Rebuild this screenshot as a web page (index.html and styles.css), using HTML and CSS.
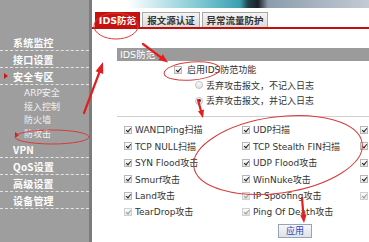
FILE: index.html
```html
<!DOCTYPE html>
<html lang="zh-CN">
<head>
<meta charset="utf-8">
<title>IDS防范</title>
<link rel="stylesheet" href="styles.css">
</head>
<body>
<div class="page">
  <aside class="sidebar">
    <div class="nav-item">系统监控</div>
    <div class="nav-item">接口设置</div>
    <div class="nav-item current">安全专区</div>
    <ul class="sub-list">
      <li class="sub-item">ARP安全</li>
      <li class="sub-item">接入控制</li>
      <li class="sub-item">防火墙</li>
      <li class="sub-item current">防攻击</li>
    </ul>
    <div class="nav-item latin">VPN</div>
    <div class="nav-item">QoS设置</div>
    <div class="nav-item">高级设置</div>
    <div class="nav-item">设备管理</div>
  </aside>
  <main class="main">
    <div class="banner"></div>
    <nav class="tabs">
      <span class="tab active">IDS防范</span>
      <span class="tab">报文源认证</span>
      <span class="tab">异常流量防护</span>
    </nav>
    <section class="content">
      <div class="section-bar">IDS防范</div>
      <div class="options">
        <label class="opt opt-enable"><input type="checkbox" class="cb" checked> 启用IDS防范功能</label>
        <label class="opt opt-radio"><input type="radio" name="mode" class="rd"> 丢弃攻击报文，不记入日志</label>
        <label class="opt opt-radio"><input type="radio" name="mode" class="rd" checked> 丢弃攻击报文，并记入日志</label>
      </div>
      <div class="grid">
        <label class="cell"><input type="checkbox" class="cb" checked>WAN口Ping扫描</label>
        <label class="cell"><input type="checkbox" class="cb" checked>UDP扫描</label>
        <label class="cell"><input type="checkbox" class="cb" checked></label>
        <label class="cell"><input type="checkbox" class="cb" checked>TCP NULL扫描</label>
        <label class="cell"><input type="checkbox" class="cb" checked>TCP Stealth FIN扫描</label>
        <label class="cell"><input type="checkbox" class="cb" checked></label>
        <label class="cell"><input type="checkbox" class="cb" checked>SYN Flood攻击</label>
        <label class="cell"><input type="checkbox" class="cb" checked>UDP Flood攻击</label>
        <label class="cell"><input type="checkbox" class="cb" checked></label>
        <label class="cell"><input type="checkbox" class="cb" checked>Smurf攻击</label>
        <label class="cell"><input type="checkbox" class="cb" checked>WinNuke攻击</label>
        <label class="cell"><input type="checkbox" class="cb" checked></label>
        <label class="cell"><input type="checkbox" class="cb" checked>Land攻击</label>
        <label class="cell"><input type="checkbox" class="cb faint" checked>IP Spoofing攻击</label>
        <label class="cell"><input type="checkbox" class="cb faint" checked></label>
        <label class="cell"><input type="checkbox" class="cb faint" checked>TearDrop攻击</label>
        <label class="cell"><input type="checkbox" class="cb faint" checked>Ping Of Death攻击</label>
        <label class="cell"></label>
      </div>
      <div class="actions"><button class="btn">应用</button></div>
    </section>
  </main>
  <svg class="marks" width="369" height="242" viewBox="0 0 369 242">
    <g fill="none" stroke="#d83a3a" stroke-width="1">
      <ellipse cx="116" cy="26" rx="22" ry="13"/>
      <ellipse cx="192" cy="71" rx="28" ry="9" transform="rotate(-5 192 71)"/>
      <ellipse cx="278" cy="155" rx="85" ry="38" transform="rotate(-8 278 155)"/>
      <ellipse cx="52" cy="137" rx="37" ry="7"/>
    </g>
    <g stroke="#e41e1e" stroke-width="2.2" stroke-linecap="round" fill="#e41e1e">
      <line x1="84" y1="113" x2="99.5" y2="72"/>
      <polygon points="103,62 103.2,74 95.6,71.2" stroke="none"/>
      <line x1="143" y1="44" x2="161" y2="57.5"/>
      <polygon points="168,62.5 158.4,60 162.8,54.2" stroke="none"/>
      <line x1="198" y1="100" x2="201" y2="111"/>
      <polygon points="203,118 204,109.4 198,111.2" stroke="none"/>
      <line x1="302" y1="198" x2="303.4" y2="215"/>
      <polygon points="304,223 306.6,214.6 300.2,215.2" stroke="none"/>
    </g>
  </svg>
</div>
</body>
</html>
```
FILE: styles.css
```css
* { box-sizing: border-box; }
html, body { margin: 0; padding: 0; }
body {
  width: 369px;
  height: 242px;
  overflow: hidden;
  background: #fff;
  font-family: "DejaVu Sans", "Noto Sans CJK SC", sans-serif;
  font-size: 9px;
  color: #333;
}
.page {
  position: relative;
  display: flex;
  width: 369px;
  height: 242px;
  overflow: hidden;
}

/* sidebar */
.sidebar {
  width: 92px;
  flex: none;
  background: #9e9e9e;
  border-right: 3px solid #7c7c7c;
  padding-top: 34px;
  color: #fff;
}
.nav-item {
  position: relative;
  height: 17px;
  line-height: 18px;
  padding-left: 13px;
  border-bottom: 1px dashed #e4e4e4;
  font-family: "Noto Sans CJK SC", sans-serif;
  font-weight: 700;
  font-size: 10px;
  letter-spacing: 0.2px;
}
.nav-item.current::before {
  content: "";
  position: absolute;
  left: 4px;
  top: 5px;
  border-left: 4px solid #d01818;
  border-top: 3px solid transparent;
  border-bottom: 3px solid transparent;
}
.sub-list {
  list-style: none;
  margin: 0;
  padding: 2px 0 0 0;
  height: 56px;
}
.sub-item {
  position: relative;
  height: 13.5px;
  line-height: 13.5px;
  padding-left: 24px;
  color: #f2f2f2;
  font-size: 9px;
}
.sub-item.current::before {
  content: "";
  position: absolute;
  left: 15px;
  top: 4px;
  border-left: 4px solid #d01818;
  border-top: 3px solid transparent;
  border-bottom: 3px solid transparent;
}

/* main */
.main {
  flex: 1;
  min-width: 0;
  overflow: hidden;
}
.banner {
  height: 8px;
  background: linear-gradient(90deg, #fff 0, #fff 36px, #d9eff3 56px, #7ac6d2 110px, #3c9fb0 148px, #22424a 156px, #1a2227 166px, #8a9cab 176px, #aab6c2 230px, #c2cad4 277px);
}
.tabs {
  display: flex;
  gap: 2px;
  margin-top: 4px;
  padding-left: 3px;
  height: 17px;
  border-bottom: 2px solid #c40f0f;
}
.tab {
  height: 15px;
  line-height: 15px;
  padding: 0 5px;
  border: 1px solid #a8a8a8;
  border-bottom: none;
  background: linear-gradient(#f4f4f4, #dcdcdc);
  font-family: "Noto Sans CJK SC", sans-serif;
  font-weight: 700;
  font-size: 9.5px;
  color: #333;
}
.tab.active {
  width: 45px;
  padding: 0;
  text-align: center;
  border-color: #c40f0f;
  background: #c8100f;
  color: #fff;
  font-family: "DejaVu Sans", "Noto Sans CJK SC", sans-serif;
}
.tab:nth-child(2) { width: 58px; text-align: center; padding: 0; }
.tab:nth-child(3) { width: 66px; text-align: center; padding: 0; }

.content {
  padding-left: 25px;
}
.section-bar {
  margin-top: 19px;
  height: 13px;
  line-height: 13px;
  padding-left: 3px;
  background: #9b9b9b;
  color: #fff;
  font-size: 9.5px;
}
.options {
  height: 56px;
  padding-top: 1px;
  border-bottom: 1px solid #d0d0d0;
}
.opt {
  display: flex;
  align-items: center;
  height: 15.5px;
  gap: 5px;
  white-space: nowrap;
}
.opt-enable { padding-left: 57px; }
.opt-radio { padding-left: 78px; gap: 3px; }

.cb, .rd {
  appearance: none;
  -webkit-appearance: none;
  margin: 0;
  flex: none;
  width: 8px;
  height: 8px;
  border: 1px solid #b8b8b8;
  background: linear-gradient(#fdfdfd, #e2e2e2);
  position: relative;
}
.cb:checked::after {
  content: "";
  position: absolute;
  left: 2px;
  top: 0;
  width: 2px;
  height: 4px;
  border-right: 1.5px solid #222;
  border-bottom: 1.5px solid #222;
  transform: rotate(40deg);
}
.cb.faint { border-color: #d0d0d0; }
.cb.faint:checked::after { border-color: #9a9a9a; }
.rd { border-radius: 50%; border-color: #c0c0c0; }
.rd:checked::after {
  content: "";
  position: absolute;
  left: 1.5px;
  top: 1.5px;
  width: 3px;
  height: 3px;
  border-radius: 50%;
  background: #333;
}

.grid {
  display: grid;
  grid-template-columns: 118px 118px 1fr;
  grid-auto-rows: 16.4px;
  padding: 4.8px 0 0 7px;
}
.cell {
  display: flex;
  align-items: center;
  gap: 3px;
  white-space: nowrap;
  overflow: hidden;
  color: #333;
}
.actions {
  padding: 4px 0 0 161px;
}
.btn {
  width: 34px;
  height: 14px;
  padding: 0;
  border: 1px solid #9aa3b0;
  background: linear-gradient(#f6f8fb, #dde3ea);
  color: #1c48b8;
  font-family: "Noto Sans CJK SC", sans-serif;
  font-size: 9px;
  line-height: 12px;
}

.marks {
  position: absolute;
  left: 0;
  top: 0;
  pointer-events: none;
}
```
